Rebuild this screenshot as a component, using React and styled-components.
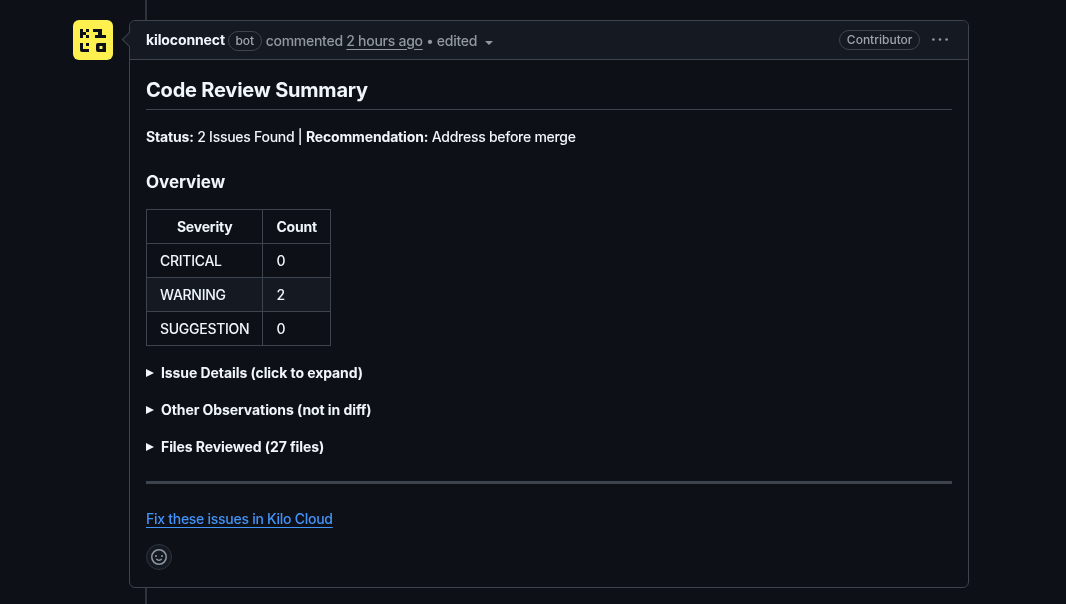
import styled, { createGlobalStyle } from 'styled-components'

const GlobalStyle = createGlobalStyle`
    html, body {
        margin: 0;
        height: 100%;
        overflow: hidden;
        background-color: #0d1017;
    }
    body {
        font-family: 'Inter', 'Liberation Sans', sans-serif;
        font-size: 14px;
        font-weight: 450;
        line-height: 21px;
        letter-spacing: -0.27px;
        color: #f0f6fc;
    }
    strong {
        letter-spacing: -0.15px;
    }
    h3 {
        letter-spacing: -0.05px;
    }
`;

const Page = styled.div`
    position: relative;
    display: flex;
    align-items: flex-start;
    gap: 16px;
    height: 604px;
    padding: 20px 0 0 73px;
    box-sizing: border-box;

    &::before {
        content: '';
        position: absolute;
        left: 145px;
        top: 0;
        bottom: 0;
        width: 2px;
        background-color: #2f333b;
    }
`;

const Avatar = styled.div`
    flex: none;
    width: 40px;
    height: 40px;
    border-radius: 6px;
    background-color: #fdf04f;
    display: flex;
    align-items: center;
    justify-content: center;
`;

const Card = styled.div`
    position: relative;
    width: 840px;
    height: 568px;
    box-sizing: border-box;
    border: 1px solid #3d444d;
    border-radius: 6px;
    background-color: #0d1017;
    will-change: transform;
`;

const Pointer = styled.span`
    position: absolute;
    left: -6px;
    top: 13px;
    width: 11px;
    height: 11px;
    box-sizing: border-box;
    background-color: #151a22;
    border-left: 1px solid #3d444d;
    border-bottom: 1px solid #3d444d;
    transform: rotate(45deg);
`;

const CardHeader = styled.header`
    display: flex;
    align-items: center;
    height: 38px;
    padding: 0 20px 0 16px;
    background-color: #151a22;
    border-bottom: 1px solid #3d444d;
    border-radius: 6px 6px 0 0;
    color: #9198a1;
`;

const Author = styled.span`
    font-weight: 650;
    letter-spacing: -0.12px;
    color: #f0f6fc;
    margin: 0 3px 2px 0;
`;

const Label = styled.span`
    display: inline-flex;
    align-items: center;
    height: 20px;
    box-sizing: border-box;
    padding: 0 6.5px;
    margin-top: ${(props) => (props.$low ? '2px' : '0')};
    border: 1px solid #3d444d;
    border-radius: 10px;
    font-size: 12px;
    font-weight: 500;
    letter-spacing: 0;
    line-height: 18px;
    color: #9da4ad;
`;

const Meta = styled.span`
    margin-left: 4px;
`;

const TimeLink = styled.span`
    text-decoration: underline;
    text-underline-offset: 3px;
`;

const Caret = styled.span`
    display: inline-block;
    margin-left: 8px;
    margin-top: 5px;
    border-left: 4px solid transparent;
    border-right: 4px solid transparent;
    border-top: 4px solid #9198a1;
`;

const HeaderActions = styled.div`
    margin-left: auto;
    display: flex;
    align-items: center;
    gap: 12px;
`;

const MoreButton = styled.span`
    display: flex;
    color: #9198a1;
`;

const Body = styled.div`
    padding: 16px 16px 0;
`;

const Title = styled.h2`
    margin: 0;
    padding-bottom: 5px;
    font-size: 20px;
    line-height: 28px;
    font-weight: 650;
    letter-spacing: -0.2px;
    border-bottom: 1px solid #3d444d;
`;

const Paragraph = styled.p`
    margin: 16px 0 0;
    strong {
        font-weight: 650;
    }
`;

const SectionTitle = styled.h3`
    margin: 24px 0 0;
    font-size: 17px;
    line-height: 22px;
    font-weight: 650;
`;

const Table = styled.table`
    margin-top: 16px;
    border-collapse: collapse;
`;

const HeadCell = styled.th`
    border: 1px solid #3d444d;
    padding: 6px 13px;
    font-weight: 650;
    letter-spacing: -0.2px;
    text-align: center;
`;

const Cell = styled.td`
    border: 1px solid #3d444d;
    padding: 6px 13px;
`;

const Row = styled.tr`
    background-color: ${(props) => (props.$striped ? '#151a22' : 'transparent')};
`;

const Details = styled.div`
    display: flex;
    align-items: center;
    gap: 6px;
    margin-top: 16px;
    font-weight: 650;
    letter-spacing: -0.08px;
`;

const Triangle = styled.span`
    width: 0;
    height: 0;
    margin-right: 1px;
    border-top: 4.5px solid transparent;
    border-bottom: 4.5px solid transparent;
    border-left: 8px solid #f0f6fc;
`;

const Rule = styled.hr`
    margin: 24px 0 0;
    height: 3px;
    border: none;
    background-color: #3d444d;
`;

const CloudLink = styled.a`
    display: block;
    width: fit-content;
    margin-top: 24px;
    color: #4493f8;
    text-decoration: underline;
    text-underline-offset: 3px;
`;

const ReactionButton = styled.span`
    display: flex;
    align-items: center;
    justify-content: center;
    width: 26px;
    height: 26px;
    box-sizing: border-box;
    margin-top: 15px;
    border: 1px solid #30353d;
    border-radius: 50%;
    background-color: #151a22;
    color: #9198a1;
`;

const KiloLogo = () => (
    <svg width="26" height="23" viewBox="0 0 26 23" fill="#0d1017">
        <path d="M0 0h3v3h3v3H3v3H0z" />
        <path d="M6 0h3v3H6zM6 6h3v3H6z" />
        <path d="M13 0h9v6h4v3H15V6h3V3h-5z" />
        <path d="M0 14h3v6h6v3H2a2 2 0 0 1-2-2z" />
        <path d="M6 14h3v3H6z" />
        <path fillRule="evenodd" d="M18 14h8v9h-8a2 2 0 0 1-2-2v-5a2 2 0 0 1 2-2zm1.5 3v3h3v-3z" />
    </svg>
);

const SmileIcon = () => (
    <svg width="16" height="16" viewBox="0 0 16 16" fill="currentColor">
        <path d="M8 0a8 8 0 1 1 0 16A8 8 0 0 1 8 0ZM1.5 8a6.5 6.5 0 1 0 13 0 6.5 6.5 0 0 0-13 0Zm3.82 1.636a.75.75 0 0 1 1.038.175l.007.009c.103.118.22.222.35.31.264.178.683.37 1.285.37.602 0 1.02-.192 1.285-.371.13-.088.247-.192.35-.31l.007-.008a.75.75 0 0 1 1.222.87l-.022-.015c.02.013.021.015.021.015v.001l-.001.002-.002.003-.005.007-.014.019a2.066 2.066 0 0 1-.184.213c-.16.166-.338.316-.53.445-.63.418-1.37.638-2.127.629-.946 0-1.652-.308-2.126-.63a3.331 3.331 0 0 1-.715-.657l-.014-.02-.005-.006-.002-.003v-.002h-.001l.613-.432-.614.43a.75.75 0 0 1 .183-1.044ZM12 7a1 1 0 1 1-2 0 1 1 0 0 1 2 0ZM5 8a1 1 0 1 1 0-2 1 1 0 0 1 0 2Zm5.25 2.25.592.416a97.71 97.71 0 0 0-.592-.416Z" />
    </svg>
);

const KebabIcon = () => (
    <svg width="16" height="16" viewBox="0 0 16 16" fill="currentColor">
        <circle cx="1.4" cy="7.5" r="1.3" />
        <circle cx="8" cy="7.5" r="1.3" />
        <circle cx="14.6" cy="7.5" r="1.3" />
    </svg>
);

const rows = [
    { severity: 'CRITICAL', count: 0 },
    { severity: 'WARNING', count: 2, striped: true },
    { severity: 'SUGGESTION', count: 0 },
];

const sections = [
    'Issue Details (click to expand)',
    'Other Observations (not in diff)',
    'Files Reviewed (27 files)',
];

export default function App() {
    return (
        <Page>
            <GlobalStyle />
            <Avatar>
                <KiloLogo />
            </Avatar>
            <Card>
                <CardHeader>
                    <Author>kiloconnect</Author>
                    <Label $low>bot</Label>
                    <Meta>commented <TimeLink>2 hours ago</TimeLink> • edited</Meta>
                    <Caret />
                    <HeaderActions>
                        <Label>Contributor</Label>
                        <MoreButton><KebabIcon /></MoreButton>
                    </HeaderActions>
                </CardHeader>
                <Pointer />
                <Body>
                    <Title>Code Review Summary</Title>
                    <Paragraph>
                        <strong>Status:</strong> 2 Issues Found | <strong>Recommendation:</strong> Address before merge
                    </Paragraph>
                    <SectionTitle>Overview</SectionTitle>
                    <Table>
                        <thead>
                            <tr>
                                <HeadCell>Severity</HeadCell>
                                <HeadCell>Count</HeadCell>
                            </tr>
                        </thead>
                        <tbody>
                            {rows.map((row) => (
                                <Row key={row.severity} $striped={row.striped}>
                                    <Cell>{row.severity}</Cell>
                                    <Cell>{row.count}</Cell>
                                </Row>
                            ))}
                        </tbody>
                    </Table>
                    {sections.map((text) => (
                        <Details key={text}>
                            <Triangle />
                            {text}
                        </Details>
                    ))}
                    <Rule />
                    <CloudLink href="#">Fix these issues in Kilo Cloud</CloudLink>
                    <ReactionButton><SmileIcon /></ReactionButton>
                </Body>
            </Card>
        </Page>
    )
}
